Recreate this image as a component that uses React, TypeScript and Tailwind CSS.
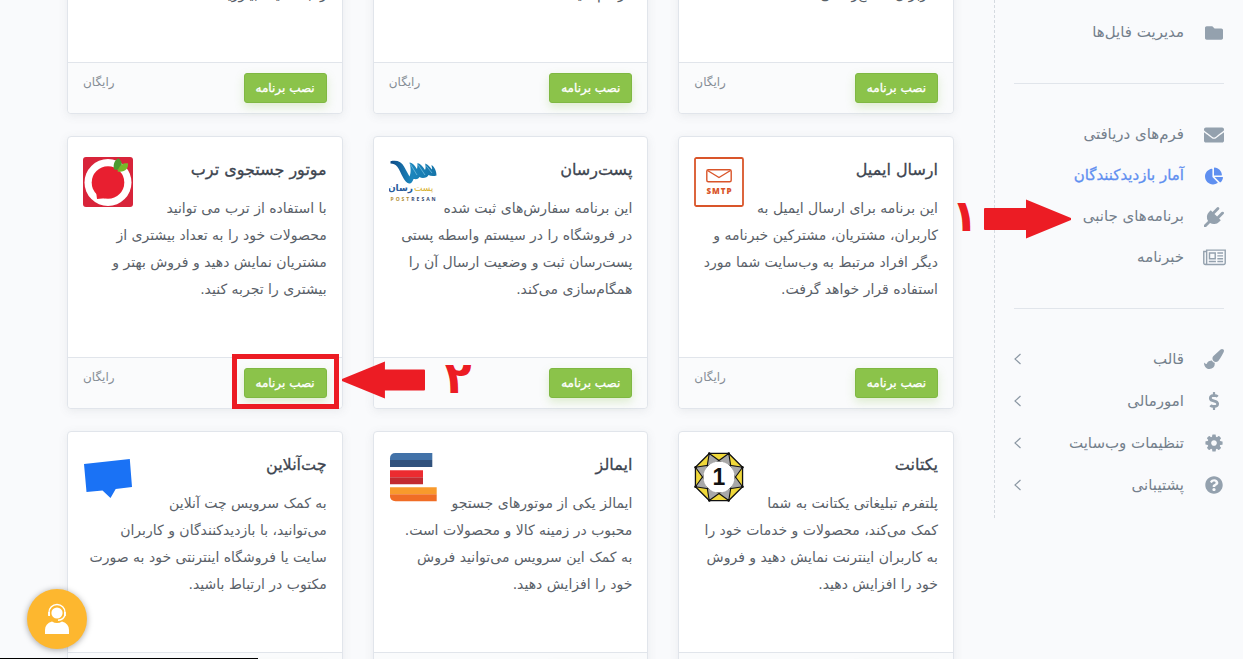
import type { ReactNode } from 'react'
import { FaChartPie, FaDollarSign, FaEnvelope, FaFolder, FaQuestionCircle } from 'react-icons/fa'

const PLUG =
  'M1755 453q37 38 37 90.5t-37 90.5l-401 400 150 150-160 160q-163 163-389.5 186.5t-411.5-100.5l-362 362h-181v-181l362-362q-124-185-100.5-411.5t186.5-389.5l160-160 150 150 400-401q38-37 91-37t90 37 37 90.5-37 90.5l-400 401 234 234 401-400q38-37 91-37t90 37z'
const NEWSPAPER =
  'M1024 512h-384v384h384v-384zm128 640v128h-640v-128h640zm0-768v640h-640v-640h640zm640 768v128h-512v-128h512zm0-256v128h-512v-128h512zm0-256v128h-512v-128h512zm0-256v128h-512v-128h512zm-1536 960v-960h-128v960q0 26 19 45t45 19 45-19 19-45zm1664 0v-1088h-1536v1088q0 33-11 64h1483q26 0 45-19t19-45zm128-1216v1216q0 80-56 136t-136 56h-1664q-80 0-136-56t-56-136v-1088h256v-128h1792z'
const BRUSH =
  'M1615 0q70 0 122.5 46.5t52.5 116.5q0 63-45 151-332 629-465 752-97 91-218 91-126 0-216.5-92.5t-90.5-219.5q0-128 92-212l638-579q59-54 130-54zm-909 1034q39 76 106.5 130t150.5 76l1 71q4 213-129.5 347t-348.5 134q-123 0-218-46.5t-152.5-127.5-86.5-183-29-220q7 5 41 30t62 44.5 59 36.5 46 17q41 0 55-37 25-66 57.5-112.5t69.5-76 88-47.5 103-25.5 125-10.5z'
const COG =
  'M1152 896q0-106-75-181t-181-75-181 75-75 181 75 181 181 75 181-75 75-181zm512-109v222q0 12-8 23t-20 13l-185 28q-19 54-39 91 35 50 107 138 10 12 10 25t-9 23q-27 37-99 108t-94 71q-12 0-26-9l-138-108q-44 23-91 38-16 136-29 186-7 28-36 28h-222q-14 0-24.5-8.5t-11.5-21.5l-28-184q-49-16-90-37l-141 107q-10 9-25 9-14 0-25-11-126-114-165-168-7-10-7-23 0-12 8-23 15-21 51-66.5t54-70.5q-27-50-41-99l-183-27q-13-2-21-12.5t-8-23.5v-222q0-12 8-23t19-13l186-28q14-46 39-92-40-57-107-138-10-12-10-24 0-10 9-23 26-36 98.5-107.5t94.5-71.5q13 0 26 10l138 107q44-23 91-38 16-136 29-186 7-28 36-28h222q14 0 24.5 8.5t11.5 21.5l28 184q49 16 90 37l142-107q9-9 24-9 13 0 25 10 129 119 165 170 7 8 7 22 0 12-8 23-15 21-51 66.5t-54 70.5q26 50 41 98l183 28q13 2 21 12.5t8 23.5z'

function Glyph({ d, wide }: { d: string; wide?: boolean }) {
  return (
    <svg
      viewBox={wide ? '0 0 2048 1792' : '0 0 1792 1792'}
      className={wide ? 'h-5 w-[23px] shrink-0' : 'size-5'}
      fill="currentColor"
    >
      <path d={d} />
    </svg>
  )
}

function SmtpLogo() {
  return (
    <svg viewBox="0 0 50 50" className="size-full">
      <rect x="1" y="1" width="48" height="48" rx="1.5" fill="#fff" stroke="#d9552a" strokeWidth="1.8" />
      <rect x="12.8" y="12.8" width="24.4" height="11.9" rx="1.5" fill="none" stroke="#d9552a" strokeWidth="1.4" />
      <path d="M13.5 13.5 25 20.5 36.5 13.5" fill="none" stroke="#d9552a" strokeWidth="1.4" />
      <text x="25.5" y="37" textAnchor="middle" fontFamily="Open Sans, sans-serif" fontWeight="800" fontSize="8" letterSpacing="1" fill="#d9552a">
        SMTP
      </text>
    </svg>
  )
}

function PostResanLogo() {
  return (
    <svg viewBox="0 0 50 50" className="size-full">
      <defs>
        <linearGradient id="wave" x1="0" x2="1">
          <stop offset="0" stopColor="#0d4a86" />
          <stop offset=".45" stopColor="#1c86bd" />
          <stop offset="1" stopColor="#1674a8" />
        </linearGradient>
      </defs>
      <path
        d="M1.5 4.2C8 3 12.5 4.5 15 9.5L20.5 19.5C22.5 15 21.5 9 20.5 5.5C24 6 26 9 28 12C28.5 9.5 28.5 8 28.5 6C32 7 34 10 36 13C37 11 36.5 9 36.2 6.5C39 7.5 41 10 43 12.5C43.5 11 42.5 10 42.5 8C45.5 10 47.5 14 47.5 18.5C44 19.5 41.5 19 39.5 18C38.5 21 33 22 30.5 20C29 23 26 22 24.5 22C23.5 25 22 27 20 26.5C15 25.5 12 15 8.5 10C6.5 7 4 6.5 1.5 6.5Z"
        fill="url(#wave)"
      />
      <path d="M21 6.5 28 18M29 7.5 36 18M37 8.5 43 16" stroke="#7cc4e4" strokeWidth=".7" />
      <text x="24" y="34" textAnchor="end" direction="ltr" fontFamily="DejaVu Sans, sans-serif" fontWeight="700" fontSize="9" fill="#2a5d9c">
        رسان
      </text>
      <text x="25" y="34" direction="ltr" fontFamily="DejaVu Sans, sans-serif" fontSize="9" fill="#d9b32f">
        پست
      </text>
      <text x="1.5" y="44" direction="ltr" fontFamily="Open Sans, sans-serif" fontWeight="700" fontSize="5" letterSpacing="2">
        <tspan fill="#b08d34">POST</tspan>
        <tspan fill="#31476f">RESAN</tspan>
      </text>
    </svg>
  )
}

function TorobLogo() {
  return (
    <svg viewBox="0 0 50 50" className="size-full">
      <rect width="50" height="50" rx="3" fill="#d8243a" />
      <circle cx="25" cy="25.5" r="23.5" fill="#fff" />
      <path d="M14 42 13 34 22 41.2Z" fill="#e81f30" />
      <circle cx="25" cy="25.5" r="16.3" fill="#e81f30" />
      <path d="M31 12.5C30 7.5 31 3.5 35.5 1.2C40 5 39.5 9 36.5 13Z" fill="#4c9b2f" />
      <path d="M34.5 14.5C36 8 40 5.5 45 6.3C45.5 12 42 15.5 34.5 14.5Z" fill="#76b82a" />
    </svg>
  )
}

function polar(radius: number, degrees: number) {
  const a = (degrees * Math.PI) / 180
  return `${25 + radius * Math.cos(a)},${25 + radius * Math.sin(a)}`
}

const corners = [22.5, 67.5, 112.5, 157.5, 202.5, 247.5, 292.5, 337.5]

function YektanetLogo() {
  return (
    <svg viewBox="0 0 50 50" className="size-full" strokeLinejoin="round" stroke="#111">
      <polygon points={corners.map((c) => polar(25.5, c)).join(' ')} fill="#f0d83a" strokeWidth="1.3" />
      {corners.map((c) => (
        <polygon key={c} points={`${polar(25.5, c)} ${polar(16, c - 25)} ${polar(16, c + 25)}`} fill="#a8a8a8" strokeWidth="1.1" />
      ))}
      <circle cx="25" cy="25" r="15.6" fill="#fff" stroke="none" />
      {corners.map((c) => (
        <path key={c} d={`M${polar(25.3, c)}L${polar(25.4, c)}`} strokeWidth="2.6" strokeLinecap="round" />
      ))}
      <text x="25" y="33" textAnchor="middle" fontFamily="Liberation Sans, sans-serif" fontWeight="700" fontSize="23" fill="#111" stroke="none">
        1
      </text>
    </svg>
  )
}

function EmallsLogo() {
  return (
    <svg viewBox="0 0 50 50" className="size-full">
      <path d="M6.5 1H43.3V8H1V6.5Q1 1 6.5 1Z" fill="#4272a8" />
      <path d="M1 8H43.3V15H1Z" fill="#31527d" />
      <path d="M1 18.3H34V25.3H1Z" fill="#ec2b30" />
      <path d="M1 25.3H34V32.3H1Z" fill="#c22a30" />
      <path d="M1 35.3H47.7V42.3H1Z" fill="#f89a2c" />
      <path d="M1 42.3H47.7V49.3H6.5Q1 49 1 44Z" fill="#f06d25" />
    </svg>
  )
}

function ChatLogo() {
  return (
    <svg viewBox="0 0 50 50" className="size-full">
      <path d="M1 12 46.800 7 49 35 32.700 37 27.500 46 19.500 38.500 3.500 40Z" fill="#1a72f5" />
    </svg>
  )
}

function Arrow({ className }: { className: string }) {
  return (
    <svg viewBox="0 0 87 40" className={className} fill="#ec1c24">
      <path d="M1 9H42V0.5L87 19 87 21 42 39.5V31H1Q0 31 0 30V10Q0 9 1 9Z" />
    </svg>
  )
}

type AppInfo = { title: string; text: string; logo: ReactNode; marked?: boolean }

const apps: AppInfo[] = [
  {
    title: 'اعلان مرورگر',
    text: 'این برنامه برای ارسال اعلان\nبه بازدیدکنندگان است و با آن\nمی‌توانید به همه مشتریان و\nکاربران اطلاع‌رسانی',
    logo: null,
  },
  {
    title: 'درگاه پرداخت',
    text: 'به کمک این سرویس\nمی‌توانید امکان پرداخت\nآنلاین را برای مشتریان خود\nفراهم کنید',
    logo: null,
  },
  {
    title: 'آمار فروشگاه',
    text: 'به کمک این برنامه\nمی‌توانید آمار فروشگاه\nاینترنتی و بازدیدکنندگان\nرا به سایت بیاورید',
    logo: null,
  },
  {
    title: 'ارسال ایمیل',
    text: 'این برنامه برای ارسال ایمیل به\nکاربران، مشتریان، مشترکین خبرنامه و\nدیگر افراد مرتبط به وب‌سایت شما مورد\nاستفاده قرار خواهد گرفت.',
    logo: <SmtpLogo />,
  },
  {
    title: 'پست‌رسان',
    text: 'این برنامه سفارش‌های ثبت شده\nدر فروشگاه را در سیستم واسطه پستی\nپست‌رسان ثبت و وضعیت ارسال آن را\nهمگام‌سازی می‌کند.',
    logo: <PostResanLogo />,
  },
  {
    title: 'موتور جستجوی ترب',
    text: 'با استفاده از ترب می توانید\nمحصولات خود را به تعداد بیشتری از\nمشتریان نمایش دهید و فروش بهتر و\nبیشتری را تجربه کنید.',
    logo: <TorobLogo />,
    marked: true,
  },
  {
    title: 'یکتانت',
    text: 'پلتفرم تبلیغاتی یکتانت به شما\nکمک می‌کند، محصولات و خدمات خود را\nبه کاربران اینترنت نمایش دهید و فروش\nخود را افزایش دهید.',
    logo: <YektanetLogo />,
  },
  {
    title: 'ایمالز',
    text: 'ایمالز یکی از موتورهای جستجو\nمحبوب در زمینه کالا و محصولات است.\nبه کمک این سرویس می‌توانید فروش\nخود را افزایش دهید.',
    logo: <EmallsLogo />,
  },
  {
    title: 'چت‌آنلاین',
    text: 'به کمک سرویس چت آنلاین\nمی‌توانید، با بازدیدکنندگان و کاربران\nسایت یا فروشگاه اینترنتی خود به صورت\nمکتوب در ارتباط باشید.',
    logo: <ChatLogo />,
  },
]

function AppCard({ app }: { app: AppInfo }) {
  return (
    <article className="flex min-h-[273px] flex-col rounded border border-[#e1e5eb] bg-white shadow-[0_2px_10px_rgba(90,97,105,0.1)]">
      <div className="flex-1 px-[15px] pt-5">
        <div className="float-left size-[50px]">{app.logo}</div>
        <h2 className="mb-3 text-base leading-[26px] text-[#3d4550] [-webkit-text-stroke:0.3px]">{app.title}</h2>
        <p className="text-sm leading-[27px] whitespace-pre text-[#5a6169]">{app.text}</p>
      </div>
      <footer className="flex items-start justify-between rounded-b border-t border-[#e1e5eb] bg-[#fafbfc] px-[15px] py-2.5">
        <div className="relative">
          <button className="block h-[30px] rounded-[3px] border border-[#7fb842] bg-[#8bc34a] px-[11px] text-xs text-white shadow-[0_4px_10px_rgba(139,195,74,0.25)] [-webkit-text-stroke:0.3px]">
            نصب برنامه
          </button>
          {app.marked && (
            <>
              <div className="pointer-events-none absolute -inset-x-3 -top-3.5 -bottom-[11px] border-[5px] border-[#ec1c24]" />
              <Arrow className="absolute -top-2 right-full mr-[-181px] h-10 w-[83px] max-w-none rotate-180" />
              <span className="absolute -top-2.5 left-full ml-[118px] text-[44px] leading-10 font-bold text-[#ec1c24]">۲</span>
            </>
          )}
        </div>
        <span className="text-xs leading-[18px] text-[#868e96]">رایگان</span>
      </footer>
    </article>
  )
}

type ItemProps = { label: string; icon: ReactNode; active?: boolean; children?: ReactNode }

function NavItem({ label, icon, active, children }: ItemProps) {
  return (
    <li className="relative">
      <a href="#" className={active ? 'flex h-[41px] items-center text-[#5f8ff0]' : 'flex h-[41px] items-center text-[#74808c]'}>
        <span className={active ? 'flex w-5 justify-center text-lg' : 'flex w-5 justify-center text-lg text-[#94a1ae]'}>{icon}</span>
        <span className={active ? 'mr-5 text-[15px] [-webkit-text-stroke:0.3px]' : 'mr-5 text-[15px]'}>{label}</span>
      </a>
      {children}
    </li>
  )
}

function NavGroup({ label, icon }: ItemProps) {
  return (
    <li>
      <a href="#" className="flex h-[42px] items-center text-[#74808c]">
        <span className="flex w-5 justify-center text-lg text-[#94a1ae]">{icon}</span>
        <span className="mr-5 text-[15px]">{label}</span>
        <svg viewBox="0 0 8 12" className="mr-auto h-3 w-2" fill="none" stroke="#8d99a5" strokeWidth="1.2">
          <path d="M6.5 1 1 6 6.5 11" />
        </svg>
      </a>
    </li>
  )
}

function Sidebar() {
  return (
    <aside className="w-[249px] shrink-0">
      <nav className="border-l border-dashed border-[#d5dae0] px-[19px] py-3">
        <ul>
          <NavItem label="مدیریت فایل‌ها" icon={<FaFolder />} />
        </ul>
        <hr className="my-[30px] border-[#e1e5eb]" />
        <ul>
          <NavItem label="فرم‌های دریافتی" icon={<FaEnvelope className="size-5 shrink-0" />} />
          <NavItem label="آمار بازدیدکنندگان" icon={<FaChartPie />} active />
          <NavItem label="برنامه‌های جانبی" icon={<Glyph d={PLUG} />}>
            <Arrow className="absolute top-[3px] right-[153px] h-10 w-[87px] max-w-none" />
            <span className="absolute top-0 right-[246px] text-[44px] leading-10 font-bold text-[#ec1c24]">۱</span>
          </NavItem>
          <NavItem label="خبرنامه" icon={<Glyph d={NEWSPAPER} wide />} />
        </ul>
        <hr className="mt-[30px] mb-[29px] border-[#e1e5eb]" />
        <ul>
          <NavGroup label="قالب" icon={<Glyph d={BRUSH} />} />
          <NavGroup label="امورمالی" icon={<FaDollarSign />} />
          <NavGroup label="تنظیمات وب‌سایت" icon={<Glyph d={COG} />} />
          <NavGroup label="پشتیبانی" icon={<FaQuestionCircle />} />
        </ul>
      </nav>
    </aside>
  )
}

function SupportButton() {
  return (
    <button
      aria-label="پشتیبانی"
      className="fixed bottom-2.5 left-[27px] flex size-[60px] items-center justify-center rounded-full bg-[#fdb72f] shadow-[0_1px_6px_rgba(0,0,0,0.35)]"
    >
      <svg viewBox="0 0 26 32" className="h-8 w-[26px]" fill="none">
        <circle cx="13" cy="10" r="5.6" fill="#fff" />
        <path d="M5 12.5V9.5A8 8 0 0 1 21 9.5V12Q20 16.5 14 17.3" stroke="#fff" strokeWidth="1.4" />
        <path d="M4.2 9H6V13H4.2ZM20 9H21.8V13H20Z" fill="#fff" />
        <path d="M1 31V27Q1 20.5 8 18.5Q13 21.5 18 18.5Q25 20.5 25 27V31Z" fill="#fff" />
      </svg>
    </button>
  )
}

function App() {
  return (
    <div dir="rtl" className="relative flex h-screen overflow-hidden bg-[#f9fafc] font-['DejaVu_Sans',sans-serif]">
      <Sidebar />
      <main className="min-w-0 flex-1 pr-10 pl-[67px]">
        <div className="-mt-[159px] grid grid-cols-3 gap-x-[30px] gap-y-[22px]">
          {apps.map((app) => (
            <AppCard key={app.title} app={app} />
          ))}
        </div>
      </main>
      <SupportButton />
      <div className="fixed bottom-0 left-0 h-px w-[258px] bg-black" />
    </div>
  )
}

export default App
